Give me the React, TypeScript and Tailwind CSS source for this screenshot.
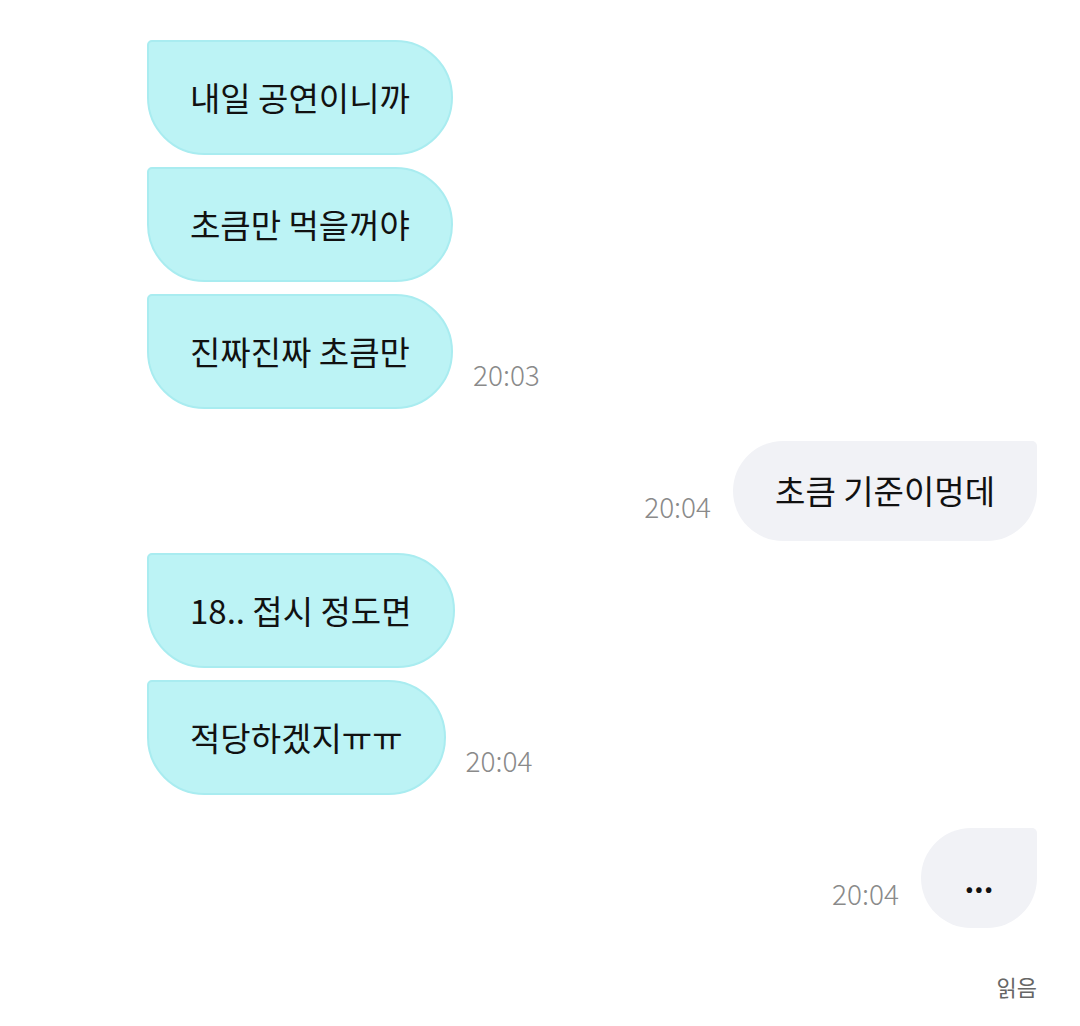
const font = { fontFamily: '"Noto Sans CJK KR", "Noto Sans", sans-serif' };

type Msg = { text: string; time?: string };

function Time({ value }: { value: string }) {
    return <span className="mb-[21px] text-[28px] font-light leading-none text-[#8a8a8a]">{value}</span>;
}

function Received({ text, time }: Msg) {
    return (
        <div className="flex items-end gap-[20px]">
            <div className="flex h-[115px] items-center rounded-[58px] rounded-tl-[5px] border-2 border-[#A9ECF0] bg-[#BCF3F5] px-[41px] text-[33px] text-[#111111]">
                {text}
            </div>
            {time && <Time value={time} />}
        </div>
    );
}

function Sent({ text, time }: Msg) {
    return (
        <div className="flex items-end justify-end gap-[22px]">
            {time && <Time value={time} />}
            <div className="flex h-[100px] items-center rounded-[50px] rounded-tr-[5px] bg-[#F1F2F6] px-[42px] text-[33px] text-[#111111]">
                {text}
            </div>
        </div>
    );
}

export default function App() {
    return (
        <div className="min-h-screen bg-white pl-[147px] pr-[43px] pt-[40px]" style={font}>
            <div className="flex flex-col gap-[12px]">
                <Received text="내일 공연이니까" />
                <Received text="초큼만 먹을꺼야" />
                <Received text="진짜진짜 초큼만" time="20:03" />
            </div>
            <div className="mt-[32px]">
                <Sent text="초큼 기준이멍데" time="20:04" />
            </div>
            <div className="mt-[12px] flex flex-col gap-[12px]">
                <Received text="18.. 접시 정도면" />
                <Received text="적당하겠지ㅠㅠ" time="20:04" />
            </div>
            <div className="mt-[33px]">
                <div className="flex items-end justify-end gap-[22px]">
                    <Time value="20:04" />
                    <div className="flex h-[100px] w-[116px] items-center justify-center rounded-[50px] rounded-tr-[5px] bg-[#F1F2F6] pt-[4px] text-[30px] font-semibold text-[#111111]">
                        ...
                    </div>
                </div>
            </div>
            <div className="mt-[42px] flex justify-end">
                <span className="text-[22px] text-[#666666]">읽음</span>
            </div>
        </div>
    );
}
